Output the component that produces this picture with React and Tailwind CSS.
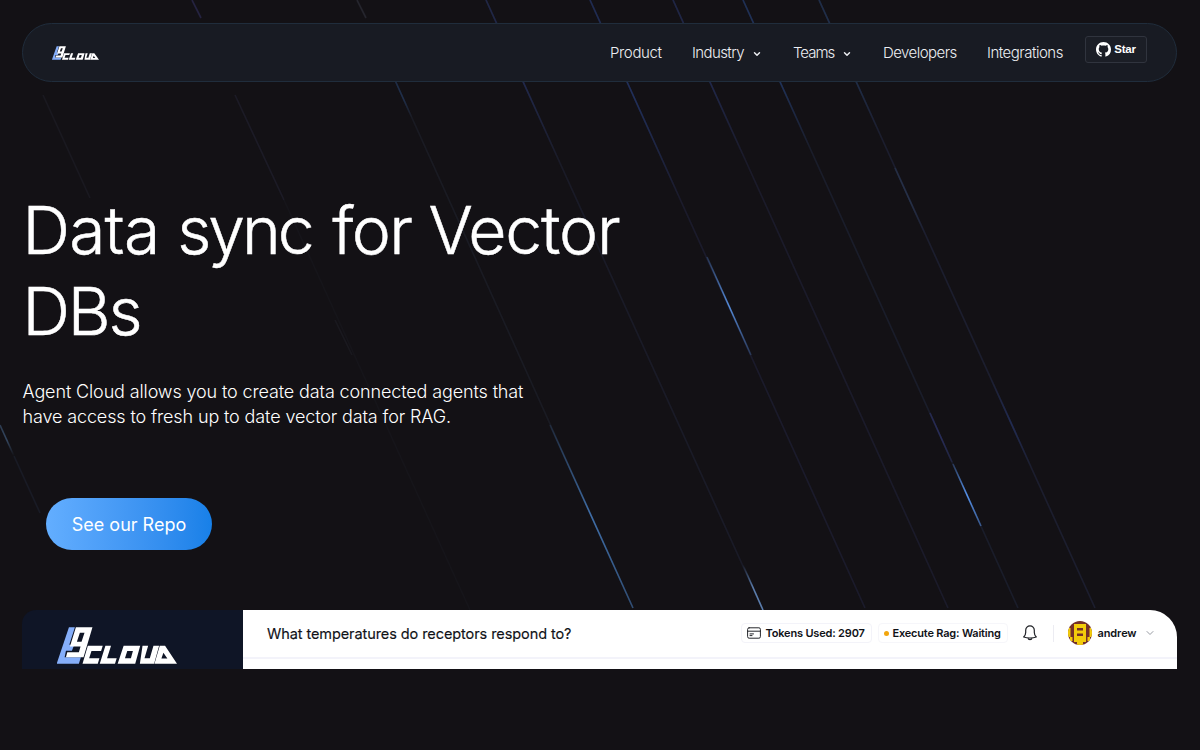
import React from "react";
import { ChevronDown } from "lucide-react";

function Logo({ className }) {
  return (
    <svg viewBox="140 98 362 108" className={className} preserveAspectRatio="none">
      <path fill="#85aefa" d="M176 99h18l-17 51h15l-7 17h-18l-4 19h49l-6 19h-67z" />
      <path fill="#fff" fillRule="evenodd" d="M197 99h50l-27 87h-53l4-14h35l5-17h-32zM209 115l-9 26h14l9-26z" />
      <path fill="#fff" d="M233 153h45l-5 15h-29l-7 21h31l-5 16h-46zM286 153h17l-12 36h29l-5 16h-46z" />
      <path fill="#fff" fillRule="evenodd" d="M341 153h50l-15 52h-53zM352 168l-7 21h18l6-21z" />
      <path fill="#fff" d="M398 153h17l-11 36h16l11-36h17l-15 52h-43z" />
      <path fill="#fff" fillRule="evenodd" d="M450 153h16l36 52h-68zM461 173l-6 17h18z" />
    </svg>
  );
}

function GithubMark() {
  return (
    <svg viewBox="0 0 16 16" className="size-[15px]" fill="currentColor">
      <path d="M8 0C3.58 0 0 3.58 0 8c0 3.54 2.29 6.53 5.47 7.59.4.07.55-.17.55-.38 0-.19-.01-.82-.01-1.49-2.01.37-2.53-.49-2.69-.94-.09-.23-.48-.94-.82-1.13-.28-.15-.68-.52-.01-.53.63-.01 1.08.58 1.23.82.72 1.21 1.87.87 2.33.66.07-.52.28-.87.51-1.07-1.78-.2-3.64-.89-3.64-3.95 0-.87.31-1.59.82-2.15-.08-.2-.36-1.02.08-2.12 0 0 .67-.21 2.2.82.64-.18 1.32-.27 2-.27s1.36.09 2 .27c1.53-1.04 2.2-.82 2.2-.82.44 1.1.16 1.92.08 2.12.51.56.82 1.27.82 2.15 0 3.07-1.87 3.75-3.65 3.95.29.25.54.73.54 1.48 0 1.07-.01 1.93-.01 2.2 0 .21.15.46.55.38A8.01 8.01 0 0 0 16 8c0-4.42-3.58-8-8-8z" />
    </svg>
  );
}

const rays = [
  { x1: 43, y1: 95, x2: 90, y2: 198, c: "#1a1920" },
  { x1: 192, y1: 0, x2: 201, y2: 18, c: "#252340" },
  { x1: 235, y1: 95, x2: 284, y2: 200, c: "#1c1b26" },
  { x1: 284, y1: 200, x2: 470, y2: 610, c: "#16151a" },
  { x1: 335, y1: 320, x2: 352, y2: 355, c: "#1a191f" },
  { x1: 14, y1: 456, x2: 40, y2: 513, c: "#191b25" },
  { x1: 357, y1: 0, x2: 366, y2: 18, c: "#25252d" },
  { x1: 394, y1: 78, x2: 633, y2: 608, c: "#1a1b23" },
  { x1: 486, y1: 0, x2: 762, y2: 608, c: "#1a1b27" },
  { x1: 590, y1: 0, x2: 865, y2: 608, c: "#1b1b2b" },
  { x1: 673, y1: 0, x2: 948, y2: 608, c: "#1b1b2a" },
  { x1: 743, y1: 0, x2: 1018, y2: 608, c: "#1a1d2a" },
  { x1: 819, y1: 0, x2: 1095, y2: 608, c: "#1c1e2e" },
];

const glows = [
  { x1: 394, y1: 78, x2: 412, y2: 118, c: "#1f2f4c", end: 0 },
  { x1: 486, y1: 0, x2: 560, y2: 163, c: "#21294d", end: 0 },
  { x1: 590, y1: 0, x2: 680, y2: 199, c: "#202f5a", end: 0 },
  { x1: 673, y1: 0, x2: 745, y2: 160, c: "#20284b", end: 0 },
  { x1: 743, y1: 0, x2: 810, y2: 148, c: "#20345e", end: 0 },
  { x1: 819, y1: 0, x2: 880, y2: 134, c: "#20314e", end: 0 },
  { x1: 895, y1: 168, x2: 925, y2: 234, c: "#263149", end: 0 },
  { x1: 991.5, y1: 380, x2: 1031.5, y2: 468, c: "#212b52", start: 0.1, end: 0 },
  { x1: 930, y1: 413, x2: 952, y2: 462, c: "#282c58", end: 0.4 },
  { x1: 550, y1: 425, x2: 633, y2: 608, c: "#3f6ea8", start: 0.2, end: 0.6 },
  { x1: 707, y1: 257, x2: 751, y2: 355, c: "#558bd8", start: 0.25, end: 0.25 },
  { x1: 953, y1: 464, x2: 981, y2: 526, c: "#5590e8", start: 0.25, end: 0.5 },
  { x1: 743, y1: 565, x2: 763, y2: 610, c: "#5a7cab", start: 0, end: 1 },
  { x1: 0, y1: 425, x2: 14, y2: 456, c: "#33465f", end: 0 },
];

function Rays() {
  return (
    <svg className="absolute inset-0 h-[610px] w-[1200px]" viewBox="0 0 1200 610">
      <defs>
        {glows.map((g, i) => (
          <linearGradient key={i} id={`glow${i}`} gradientUnits="userSpaceOnUse" x1={g.x1} y1={g.y1} x2={g.x2} y2={g.y2}>
            <stop offset="0" stopColor={g.c} stopOpacity={g.start ?? 0.8} />
            <stop offset="0.5" stopColor={g.c} />
            <stop offset="1" stopColor={g.c} stopOpacity={g.end} />
          </linearGradient>
        ))}
      </defs>
      {rays.map((r, i) => (
        <line key={i} x1={r.x1} y1={r.y1} x2={r.x2} y2={r.y2} stroke={r.c} strokeWidth="1.7" />
      ))}
      {glows.map((g, i) => (
        <line key={i} x1={g.x1} y1={g.y1} x2={g.x2} y2={g.y2} stroke={`url(#glow${i})`} strokeWidth="1.6" />
      ))}
    </svg>
  );
}

function CardIcon() {
  return (
    <svg viewBox="0 0 14 12" className="h-[12px] w-[14px] shrink-0" fill="none" stroke="#25272c" strokeWidth="1" strokeLinecap="round">
      <rect x="0.6" y="0.8" width="12.8" height="10.4" rx="1.5" />
      <path d="M0.6 4.2h12.8M3 6.9h3.5M3 8.6h2" />
    </svg>
  );
}

function BellIcon() {
  return (
    <svg viewBox="0 0 14 16" className="h-[16px] w-[14px] shrink-0" fill="none" stroke="#202227" strokeWidth="1.2" strokeLinejoin="round" strokeLinecap="round">
      <path d="M7 .9a4.3 4.3 0 0 0-4.3 4.3v2.2c0 1.8-.8 3.3-2 4.6 1.9.7 4 1 6.3 1s4.4-.3 6.3-1c-1.2-1.3-2-2.8-2-4.6V5.2A4.3 4.3 0 0 0 7 .9zM4.9 13a2.15 2.15 0 0 0 4.2 0" />
    </svg>
  );
}

function Avatar() {
  return (
    <svg viewBox="0 0 24 24" className="size-[24px] shrink-0">
      <defs><clipPath id="face"><circle cx="12" cy="12" r="12" /></clipPath></defs>
      <g clipPath="url(#face)">
        <path fill="#74302a" d="M0 0h24v24H0z" />
        <path fill="#f3cc0b" d="M6 3h12v18H6zM0 7h2.5v9H0zM21.5 7h2.5v9h-2.5zM2 16h2.5v4H2zM19.5 16h2.5v4h-2.5zM9 21h6v3H9z" />
        <path fill="#74302a" d="M9 7h6v2.5H9zM9 12.5h6v2.5H9z" />
      </g>
    </svg>
  );
}

export default function App() {
  return (
    <div className="relative h-[750px] w-[1200px] overflow-hidden bg-[#131115] font-['Inter',sans-serif] text-white">
      <Rays />
      <div className="relative flex flex-col pt-[23px] pr-[23px] pl-[22px]">
        <header className="flex h-[59px] items-center rounded-full border border-[#202d3c] bg-[#181b23] pl-[29px]">
          <Logo className="h-[14px] w-[47px]" />
          <nav className="ml-[511px] flex items-center pt-[2px] text-[15px] font-light whitespace-nowrap text-[#eceef2]">
            <span className="w-[82px] tracking-[-0.35px]">Product</span>
            <span className="w-[60px] tracking-[-0.6px]">Industry</span>
            <ChevronDown className="mr-[31px] size-[10px]" strokeWidth={3.5} />
            <span className="w-[49px] tracking-[-1px]">Teams</span>
            <ChevronDown className="mr-[31px] size-[10px]" strokeWidth={3.5} />
            <span className="w-[104px] tracking-[-0.55px]">Developers</span>
            <span className="w-[98px] tracking-[-0.5px]">Integrations</span>
          </nav>
          <a className="mb-[6px] flex h-[27px] w-[62px] items-center justify-center gap-[3px] rounded-[3px] border border-[#30343e] bg-[#1b1e26] font-['Liberation_Sans',sans-serif] text-[11.5px] font-bold tracking-[-0.2px]">
            <GithubMark />
            Star
          </a>
        </header>
        <h1 className="mt-[108px] pl-[0.5px] text-[66px] leading-[81px] font-light tracking-[-1.6px] [-webkit-text-stroke:0.5px_white]">
          <div className="whitespace-nowrap">
            <span className="tracking-[-0.8px]">Data </span>
            <span className="tracking-[-3px]">sync</span>
            <span className="tracking-[2px]"> </span>
            <span className="tracking-[-1.6px]">for </span>
            <span className="tracking-[-1.2px]">Vector</span>
          </div>
          <div className="tracking-[-2.2px]">DBs</div>
        </h1>
        <p className="mt-[28px] pl-[0.5px] text-[18px] leading-[24.5px] font-light tracking-[-0.13px] text-white">
          <span className="block">Agent Cloud allows you to create data connected agents that</span>
          <span className="block">have access to fresh up to date vector data for RAG.</span>
        </p>
        <button className="mt-[69px] ml-[24px] h-[52px] w-[166px] rounded-full bg-linear-to-r from-[#63aeff] to-[#1780e8] text-[18px]">
          See our Repo
        </button>
        <section className="mt-[60px] flex h-[58.5px] overflow-hidden text-[#101217]">
          <aside className="w-[220.5px] rounded-tl-[14px] bg-[#0f1526] pt-[17px] pl-[35px]">
            <Logo className="h-[37px] w-[120px]" />
          </aside>
          <div className="flex-1 rounded-tr-[27px] bg-white">
            <div className="flex h-[49px] items-center border-b-2 border-[#f3f3fa] pb-px pl-[24px] text-[11px] font-semibold whitespace-nowrap">
              <h2 className="w-[474px] pt-px pl-[0.5px] text-[14.5px] font-normal tracking-[-0.08px] [-webkit-text-stroke:0.15px_#101217]">
                What temperatures do receptors respond to?
              </h2>
              <div className="flex h-[20px] w-[131px] items-center gap-[5px] rounded border border-[#f3f3f9] pl-[5px] tracking-[-0.18px]">
                <CardIcon />
                Tokens Used: 2907
              </div>
              <div className="ml-[6px] flex h-[20px] w-[130px] items-center gap-[4px] rounded border border-[#f6f6fa] pl-[5px] tracking-[-0.2px]">
                <span className="size-[5px] rounded-full bg-[#f2a60d]" />
                Execute Rag: Waiting
              </div>
              <div className="ml-[15px]"><BellIcon /></div>
              <span className="mr-[14px] ml-[16px] h-[17px] w-px bg-[#ececf2]" />
              <Avatar />
              <span className="ml-[6px] w-[46px] tracking-[-0.1px]">andrew</span>
              <ChevronDown className="size-[12px] text-[#989ba3]" strokeWidth={2} />
            </div>
          </div>
        </section>
      </div>
    </div>
  );
}
